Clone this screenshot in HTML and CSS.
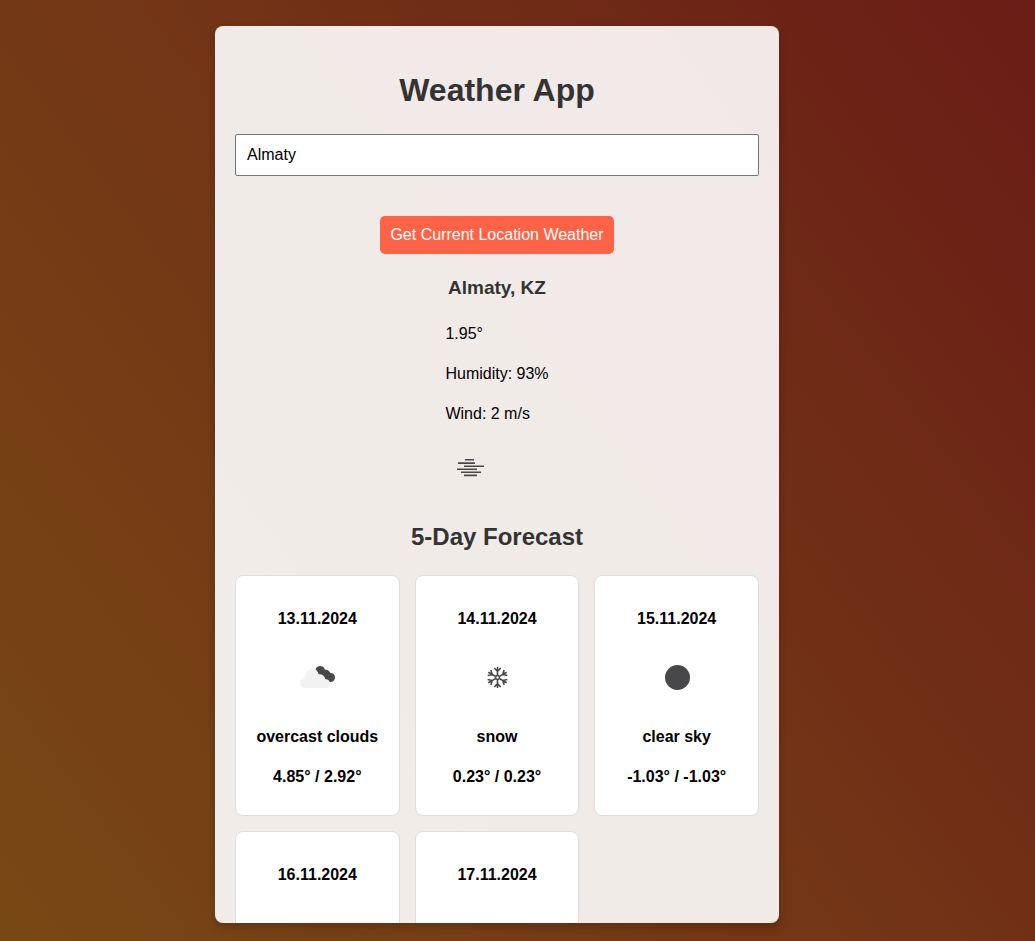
FILE: index.html
```html
<!DOCTYPE html>
<html lang="en">
<head>
<meta charset="utf-8">
<title>Weather App</title>
<link rel="stylesheet" href="styles.css">
</head>
<body>
<main class="app">
  <h1 class="app-title">Weather App</h1>
  <input class="search" type="text" value="Almaty" aria-label="City">
  <button class="locate" type="button">Get Current Location Weather</button>

  <section class="current">
    <h3 class="place">Almaty, KZ</h3>
    <p>1.95°</p>
    <p>Humidity: 93%</p>
    <p>Wind: 2 m/s</p>
    <div class="icon-row">
      <svg class="icon" viewBox="0 0 50 50" fill="none" stroke="#48484a" stroke-width="1.6" aria-hidden="true">
        <path d="M20 17.800h9M13 21.100h17M19 24.200h20M12 27.200h20M16 30.300h20M19 33.400h13"/>
      </svg>
    </div>
  </section>

  <h2 class="forecast-title">5-Day Forecast</h2>
  <section class="forecast">
    <article class="day">
      <h4 class="date">13.11.2024</h4>
      <div class="icon-row">
        <svg class="icon" viewBox="0 0 50 50" aria-hidden="true">
          <path fill="#48484a" d="M23.600 17.600C24 15.400 26 14 28.300 14c2.300 0 4.200 1.500 4.700 3.800 2.500-.3 4.600 1.100 5.400 3.300 2.600-.1 4.600 1.800 4.600 4.300 0 2.600-1.900 4.600-4.500 4.600-1.700 0-3.200-.5-4.100-2-1.700.1-3.300-.5-4.400-1.900l-.5-2.600-2.700-.4c-.7-2.300-1.700-3.800-3.200-5.500z"/>
          <path fill="#f2f2f2" d="M14.200 36C10.700 36 8 33.700 8 30.500c0-3 2.300-5.300 5.300-5.500.1-4.600 2.700-8 6.700-8 3.300 0 5.700 2 6.600 5.300 3.200-.5 6 1.500 6.700 4.700 2.700.1 4.700 2 4.700 4.500 0 2.700-2 4.500-5 4.500z"/>
        </svg>
      </div>
      <p>overcast clouds</p>
      <p>4.85° / 2.92°</p>
    </article>
    <article class="day">
      <h4 class="date">14.11.2024</h4>
      <div class="icon-row">
        <svg class="icon" viewBox="0 0 50 50" fill="none" stroke="#48484a" stroke-width="1.6" aria-hidden="true">
          <defs>
            <path id="arm" d="M25.500 23.300V14.900M22.300 16l3.200 3.400L28.700 16M25.500 23.300l1.900 1.100"/>
          </defs>
          <use href="#arm"/>
          <use href="#arm" transform="rotate(60 25.500 25.500)"/>
          <use href="#arm" transform="rotate(120 25.500 25.500)"/>
          <use href="#arm" transform="rotate(180 25.500 25.500)"/>
          <use href="#arm" transform="rotate(240 25.500 25.500)"/>
          <use href="#arm" transform="rotate(300 25.500 25.500)"/>
        </svg>
      </div>
      <p>snow</p>
      <p>0.23° / 0.23°</p>
    </article>
    <article class="day">
      <h4 class="date">15.11.2024</h4>
      <div class="icon-row">
        <svg class="icon" viewBox="0 0 50 50" aria-hidden="true">
          <circle cx="25.500" cy="25.500" r="12.500" fill="#48484a"/>
        </svg>
      </div>
      <p>clear sky</p>
      <p>-1.03° / -1.03°</p>
    </article>
    <article class="day">
      <h4 class="date">16.11.2024</h4>
    </article>
    <article class="day">
      <h4 class="date">17.11.2024</h4>
    </article>
  </section>
</main>
</body>
</html>
```
FILE: styles.css
```css
* {
  box-sizing: border-box;
}

body {
  margin: 0;
  height: 100vh;
  padding: 26px 41px 18px 0;
  display: flex;
  justify-content: center;
  overflow: hidden;
  font-family: Arial, "Liberation Sans", sans-serif;
  font-size: 16px;
  line-height: 24px;
  color: #000;
  background: linear-gradient(53deg, #784814, #723316 54%, #6a1c16);
}

.app {
  display: flex;
  flex-direction: column;
  align-items: center;
  width: 100%;
  max-width: 564px;
  padding: 20px;
  overflow: hidden;
  border-radius: 8px;
  background: rgba(255, 255, 255, 0.9);
  box-shadow: 0 4px 8px rgba(0, 0, 0, 0.2);
}

.app-title,
.place,
.forecast-title {
  color: #333;
  text-align: center;
}

.app-title {
  margin: 20px 0;
  font-size: 32px;
  line-height: 48px;
}

.search {
  flex: none;
  width: 100%;
  height: 42px;
  padding: 0 11px;
  border: 1px solid #767676;
  border-radius: 2px;
  background: #fff;
  color: #000;
  font: inherit;
}

.locate {
  flex: none;
  height: 38px;
  margin-top: 40px;
  padding: 0 10px;
  border: 0;
  border-radius: 5px;
  background: #ff6347;
  color: #fff;
  font: inherit;
}

.current {
  flex: none;
}

.place {
  margin: 20px 0;
  font-size: 19px;
  line-height: 28px;
}

p {
  margin: 16px 0;
}

.icon-row {
  height: 57px;
}

.icon {
  display: block;
  width: 50px;
  height: 50px;
}

.forecast-title {
  margin: 20px 0;
  font-size: 24px;
  line-height: 36px;
}

.forecast {
  flex: none;
  display: grid;
  grid-template-columns: repeat(3, 1fr);
  gap: 15px;
  width: 100%;
}

.day {
  min-height: 241px;
  padding: 10px;
  border: 1px solid #ddd;
  border-radius: 8px;
  background: #fff;
  font-weight: bold;
  text-align: center;
}

.day .icon {
  margin: 0 auto;
}

.date {
  margin: 21px 0;
  font-size: 16px;
}
```
